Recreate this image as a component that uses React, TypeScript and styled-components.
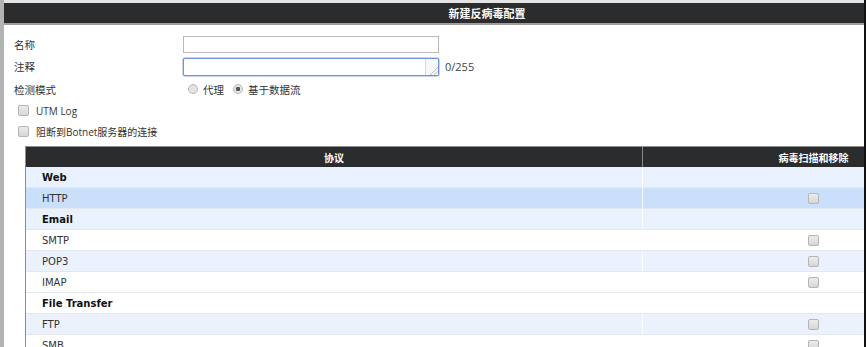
import React from "react";
import styled, { createGlobalStyle } from "styled-components";

const Global = createGlobalStyle`
  html, body { margin: 0; padding: 0; background: #fff; }
  body { overflow: hidden; font-family: "DejaVu Sans", "Noto Sans CJK SC", sans-serif; }
  #root { width: 866px; height: 347px; }
`;

const Frame = styled.div`
  display: flex;
  width: 866px;
  height: 347px;
  overflow: hidden;
`;

const LeftEdge = styled.div`
  width: 4px;
  flex: none;
  background: #b3b3b3;
`;

const RightEdge = styled.div`
  width: 2px;
  flex: none;
  background: #111;
`;

const Main = styled.div`
  flex: 1;
  min-width: 0;
  display: flex;
  flex-direction: column;
  overflow: hidden;
`;

const TopStrip = styled.div`
  height: 3px;
  background: #e4e4e4;
  flex: none;
`;

const TitleBar = styled.div`
  height: 20px;
  background: #2b2c2e;
  border-bottom: 2px solid #a0a0a0;
  color: #fff;
  font-family: "Noto Sans CJK SC", sans-serif;
  font-weight: 700;
  font-size: 11px;
  display: flex;
  align-items: center;
  justify-content: center;
  padding-left: 106px;
  flex: none;
`;

const Form = styled.div`
  padding: 9px 0 0 10px;
  display: flex;
  flex-direction: column;
`;

const FieldRow = styled.div<{ $h: number }>`
  display: flex;
  align-items: center;
  height: ${(p) => p.$h}px;
`;

const Label = styled.div`
  width: 169px;
  font-family: "Noto Sans CJK SC", sans-serif;
  font-size: 10.5px;
  color: #333;
`;

const TextBox = styled.div<{ $focus?: boolean }>`
  width: 256px;
  height: ${(p) => (p.$focus ? 18 : 17)}px;
  box-sizing: border-box;
  border: ${(p) => (p.$focus ? "1px solid #6f93e0" : "1px solid #b9b9b9")};
  border-radius: ${(p) => (p.$focus ? "2px" : "0")};
  background: #fff;
  position: relative;
  box-shadow: ${(p) => (p.$focus ? "0 0 0 0.5px #8fa9ea" : "none")};
`;

const Resize = styled.div`
  position: absolute;
  right: 0;
  top: 0;
  bottom: 0;
  width: 12px;
  border-left: 1px solid #dcdcdc;
  background: linear-gradient(135deg, #f8f8f8 70%, #bbb 71%, #f8f8f8 76%, #f8f8f8 84%, #bbb 85%, #f8f8f8 90%);
`;

const Counter = styled.span`
  margin-left: 6px;
  font-family: "Open Sans", "DejaVu Sans", sans-serif;
  font-size: 11px;
  color: #444;
`;

const Radio = styled.span<{ $on?: boolean }>`
  width: 8px;
  height: 8px;
  border-radius: 50%;
  border: 1px solid #b8b8b8;
  background: ${(p) =>
    p.$on
      ? "radial-gradient(circle, #555 0 2px, #e6e6e6 2.5px)"
      : "#e4e4e4"};
  display: inline-block;
  margin-left: 5px;
  margin-right: 5px;
`;

const OptText = styled.span`
  font-family: "Noto Sans CJK SC", sans-serif;
  font-size: 10.5px;
  color: #333;
  margin-right: 4px;
`;

const CheckRow = styled.div`
  display: flex;
  align-items: center;
  height: 21px;
  padding-left: 4px;
`;

const Check = styled.span`
  width: 9px;
  height: 9px;
  border: 1px solid #b5b5b5;
  border-radius: 2px;
  background: linear-gradient(#ececec, #d6d6d6);
  display: inline-block;
  flex: none;
`;

const CheckText = styled.span`
  margin-left: 7px;
  font-family: "Open Sans", "Noto Sans CJK SC", sans-serif;
  font-size: 10px;
  color: #333;
`;

const TableWrap = styled.div`
  margin: 4px 0 0 21px;
  width: 958px;
  border: 1px solid #8f8f8f;
  border-bottom: none;
`;

const Grid = styled.div`
  display: grid;
  grid-template-columns: 616px 1fr;
`;

const HeadCell = styled.div<{ $last?: boolean }>`
  height: 20px;
  background: #2b2c2e;
  color: #fff;
  font-family: "Noto Sans CJK SC", sans-serif;
  font-weight: 700;
  font-size: 10px;
  display: flex;
  align-items: center;
  justify-content: center;
  border-left: ${(p) => (p.$last ? "1px solid #888" : "none")};
`;

const Cell = styled.div<{ $bg: string; $bold?: boolean; $right?: boolean }>`
  height: 20px;
  background: ${(p) => p.$bg};
  border-bottom: 1px solid #e4e8ee;
  display: flex;
  align-items: center;
  justify-content: ${(p) => (p.$right ? "center" : "flex-start")};
  padding-left: ${(p) => (p.$right ? "0" : "16px")};
  font-family: "DejaVu Sans", Verdana, sans-serif;
  font-size: 10px;
  font-weight: ${(p) => (p.$bold ? 700 : 400)};
  color: ${(p) => (p.$bold ? "#111" : "#333")};
  border-left: ${(p) => (p.$right ? "1px solid rgba(255,255,255,0.8)" : "none")};
`;

type Row = { name: string; group?: boolean; bg: string; check?: boolean };

const rows: Row[] = [
  { name: "Web", group: true, bg: "#e8f1fd" },
  { name: "HTTP", bg: "#cadffa", check: true },
  { name: "Email", group: true, bg: "#e8f1fd" },
  { name: "SMTP", bg: "#ffffff", check: true },
  { name: "POP3", bg: "#ebf2fd", check: true },
  { name: "IMAP", bg: "#ffffff", check: true },
  { name: "File Transfer", group: true, bg: "#ffffff" },
  { name: "FTP", bg: "#ebf2fd", check: true },
  { name: "SMB", bg: "#ffffff", check: true },
];

export default function App() {
  return (
    <>
      <Global />
      <Frame>
        <LeftEdge />
        <Main>
          <TopStrip />
          <TitleBar>新建反病毒配置</TitleBar>
          <Form>
            <FieldRow $h={21}>
              <Label>名称</Label>
              <TextBox />
            </FieldRow>
            <FieldRow $h={23}>
              <Label>注释</Label>
              <TextBox $focus>
                <Resize />
              </TextBox>
              <Counter>0/255</Counter>
            </FieldRow>
            <FieldRow $h={22}>
              <Label>检测模式</Label>
              <Radio />
              <OptText>代理</OptText>
              <Radio $on />
              <OptText>基于数据流</OptText>
            </FieldRow>
            <CheckRow>
              <Check />
              <CheckText>UTM Log</CheckText>
            </CheckRow>
            <CheckRow>
              <Check />
              <CheckText>阻断到Botnet服务器的连接</CheckText>
            </CheckRow>
          </Form>
          <TableWrap>
            <Grid>
              <HeadCell>协议</HeadCell>
              <HeadCell $last>病毒扫描和移除</HeadCell>
              {rows.map((r) => (
                <React.Fragment key={r.name}>
                  <Cell $bg={r.bg} $bold={r.group}>
                    {r.name}
                  </Cell>
                  <Cell $bg={r.bg} $right>
                    {r.check ? <Check /> : null}
                  </Cell>
                </React.Fragment>
              ))}
            </Grid>
          </TableWrap>
        </Main>
        <RightEdge />
      </Frame>
    </>
  );
}
